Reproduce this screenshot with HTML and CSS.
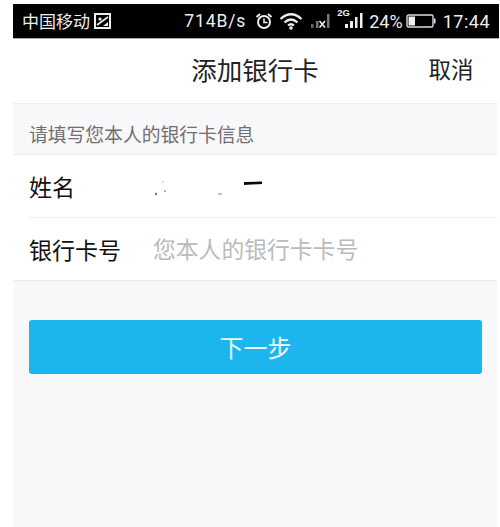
FILE: index.html
```html
<!DOCTYPE html>
<html lang="zh-CN">
<head>
<meta charset="utf-8">
<title>添加银行卡</title>
<link rel="stylesheet" href="styles.css">
</head>
<body>
<div class="phone">
  <div class="status">
    <div class="status-left">
      <span class="carrier">中国移动</span>
      <svg class="pic" width="17" height="16" viewBox="0 0 17 16"><rect x="1" y="1" width="15" height="14" fill="none" stroke="#eee" stroke-width="2"/><path d="M3 12 L14 4" stroke="#eee" stroke-width="1.6"/><circle cx="6" cy="6" r="1.6" fill="#eee"/><path d="M9 13h5V9z" fill="#eee"/></svg>
    </div>
    <div class="status-right">
      <span class="speed">714B/s</span>
      <svg class="alarm" width="18" height="18" viewBox="0 0 18 18"><circle cx="9" cy="10" r="6" fill="none" stroke="#eee" stroke-width="2"/><path d="M9 6.500V10.500H12.500" fill="none" stroke="#eee" stroke-width="1.600"/><path d="M1.500 5 L5 2 M16.500 5 L13 2" stroke="#eee" stroke-width="2"/></svg>
      <svg class="wifi" width="24" height="18" viewBox="0 0 24 18"><path d="M1.500 7 Q12 -2.500 22.500 7 M5.500 10.500 Q12 4.500 18.500 10.500 M9 13.500 Q12 11 15 13.500" fill="none" stroke="#eee" stroke-width="2.200"/><circle cx="12" cy="16" r="1.800" fill="#eee"/></svg>
      <svg class="sim1" width="22" height="18" viewBox="0 0 22 18"><rect x="1" y="12" width="2.500" height="4" fill="#666"/><rect x="6" y="9" width="2.500" height="7" fill="#777"/><path d="M9.500 9 L15 15.500 M15 9 L9.500 15.500" stroke="#eee" stroke-width="1.600"/><rect x="17" y="2" width="2.500" height="14" fill="#777"/></svg>
      <span class="sim2">
        <span class="net">2G</span>
        <svg width="19" height="18" viewBox="0 0 19 18"><rect x="1" y="12" width="3" height="4" fill="#eee"/><rect x="6" y="9" width="3" height="7" fill="#eee"/><rect x="11" y="5" width="2.500" height="11" fill="#eee"/><rect x="16" y="1" width="2.500" height="15" fill="#eee"/></svg>
      </span>
      <span class="percent">24%</span>
      <svg class="battery" width="30" height="14" viewBox="0 0 30 14"><rect x="1" y="1" width="26" height="12" rx="1.500" fill="none" stroke="#ddd" stroke-width="1.400"/><rect x="2.500" y="2.500" width="6.500" height="9" fill="#eee"/><rect x="28" y="4.500" width="1.500" height="5" fill="#ddd"/></svg>
      <span class="time">17:44</span>
    </div>
  </div>
  <header class="nav">
    <h1 class="title">添加银行卡</h1>
    <span class="cancel">取消</span>
  </header>
  <main class="content">
    <p class="hint">请填写您本人的银行卡信息</p>
    <section class="form">
      <div class="row row-first">
        <span class="label">姓名</span>
        <svg class="smudge" width="112" height="20" viewBox="0 0 112 20"><circle cx="3" cy="18" r="1.200" fill="#777"/><circle cx="12" cy="15" r="1" fill="#999"/><circle cx="10" cy="6" r="0.800" fill="#aaa"/><rect x="65" y="17.500" width="4" height="1" fill="#888"/><path d="M91 6 L109 5.500 V8 L91 9 Z" fill="#0a0a0a"/></svg>
      </div>
      <div class="row">
        <span class="label">银行卡号</span>
        <span class="placeholder">您本人的银行卡卡号</span>
      </div>
    </section>
    <button class="next" type="button">下一步</button>
  </main>
</div>
</body>
</html>
```
FILE: styles.css
```css
* { box-sizing: border-box; }
html, body { margin: 0; height: 100%; background: #fff; }
body {
  font-family: "Noto Sans CJK SC", "Liberation Sans", sans-serif;
  overflow: hidden;
  padding: 4px 1px 0 13px;
}
.phone { height: 523px; display: flex; flex-direction: column; }
.status {
  height: 35px;
  background: #000;
  border-bottom: 1px solid #aaa;
  color: #eee;
  display: flex;
  justify-content: space-between;
  align-items: center;
  padding: 0 9px 0 9px;
  flex: none;
}
.status-left { display: flex; align-items: center; gap: 4px; }
.carrier { font-size: 17px; line-height: 20px; }
.pic { display: block; }
.status-right { display: flex; align-items: center; }
.speed { font-family: "Roboto", sans-serif; font-size: 17.500px; letter-spacing: 0.9px; margin-right: 9px; }
.alarm { display: block; margin-right: 6px; }
.wifi { display: block; margin-right: 7px; }
.sim1 { display: block; margin-right: 5px; }
.sim2 { display: flex; align-items: flex-end; position: relative; width: 26px; justify-content: flex-end; margin-right: 6px; }
.net { position: absolute; left: 0; top: -4px; font: 700 9.500px/10px "Liberation Sans", sans-serif; }
.percent { font-family: "Roboto", sans-serif; font-size: 18px; margin-right: 3px; }
.battery { display: block; margin-right: 7px; }
.time { font-family: "Roboto", sans-serif; font-size: 18px; letter-spacing: 0.5px; }
.nav {
  height: 65px;
  margin-right: 2px;
  background: #fff;
  border-bottom: 1px solid #efeef0;
  display: flex;
  align-items: center;
  justify-content: center;
  position: relative;
  flex: none;
}
.title { margin: 0 0 4px; font-size: 25.500px; font-weight: 400; color: #222; line-height: 34px; }
.cancel { position: absolute; left: 415.500px; top: 13px; font-size: 22.500px; line-height: 32px; color: #222; }
.content { flex: 1; margin-right: 2px; background: #f8f7fa; display: flex; flex-direction: column; }
.hint {
  margin: 0;
  height: 50px;
  padding: 15px 0 0 16px;
  font-size: 18.800px;
  line-height: 30px;
  color: #6f6f72;
}
.form { background: #fff; border-top: 1px solid #ebeaec; border-bottom: 1px solid #ebeaec; }
.row { height: 63px; margin-left: 16px; display: flex; align-items: center; border-top: 1px solid #efeef0; }
.row-first { border-top: 0; height: 62px; }
.label { width: 124px; font-size: 23px; color: #111; line-height: 32px; flex: none; }
.smudge { display: block; }
.placeholder { font-size: 22.800px; line-height: 32px; color: #bbb; margin-top: -1px; }
.next {
  margin: 39px 0 0 16px;
  width: 453px;
  height: 54px;
  border: 0;
  border-radius: 3px;
  background: #1db5ee;
  color: #eafaff;
  font-family: inherit;
  font-size: 24px;
  line-height: 30px;
  padding: 0;
}
```
